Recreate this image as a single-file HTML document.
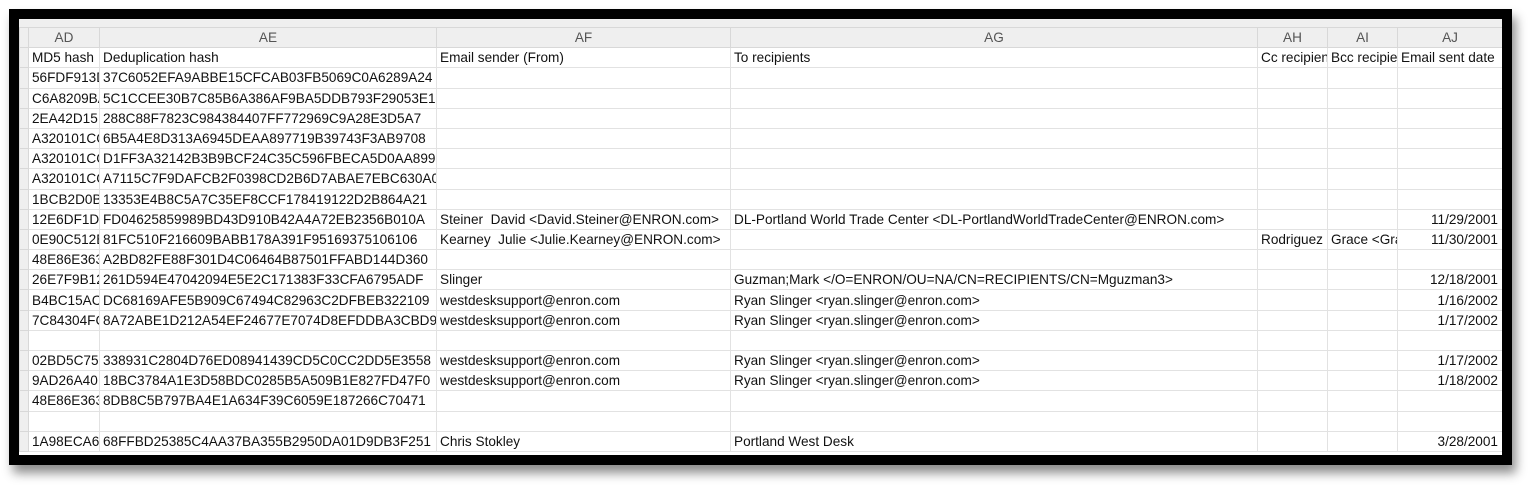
<!DOCTYPE html>
<html><head><meta charset="utf-8"><style>
body{margin:0;width:1536px;height:490px;background:#fff;overflow:hidden;position:relative;font-family:"Liberation Sans",Arial,sans-serif}
#frame{position:absolute;left:9px;top:9px;width:1503px;height:456px;background:#000;box-shadow:4px 8px 10px rgba(0,0,0,.45)}
#inner{position:absolute;left:10px;top:10px;width:1483px;height:436px;background:#fff;overflow:hidden}
table{position:absolute;left:0;top:8px;width:1483px;border-collapse:collapse;table-layout:fixed;font-size:13.6px;color:#111}
td{height:19.2px;padding:0 0 0 3px;border:1px solid #e2e2e2;white-space:nowrap;overflow:hidden;line-height:19px}
tr.h td{background:#efefef;color:#555;text-align:center;padding:0;border-color:#d8d8d8}
td.r{text-align:right;padding-right:4px}
td.s{background:#efefef;border-color:#d8d8d8}
.top{position:absolute;left:0;top:0;width:1483px;height:8px;background:#efefef}
</style></head><body>
<div id="frame"><div id="inner"><div class="top"></div>
<table>
<colgroup><col style="width:9px"><col style="width:71px"><col style="width:337px"><col style="width:294px"><col style="width:527px"><col style="width:70px"><col style="width:70px"><col style="width:105px"></colgroup>
<tr class="h"><td></td><td>AD</td><td>AE</td><td>AF</td><td>AG</td><td>AH</td><td>AI</td><td>AJ</td></tr>
<tr><td class="s"></td><td>MD5 hash</td><td>Deduplication hash</td><td>Email sender (From)</td><td>To recipients</td><td>Cc recipients</td><td>Bcc recipients</td><td>Email sent date</td></tr>
<tr><td class="s"></td><td>56FDF913D</td><td>37C6052EFA9ABBE15CFCAB03FB5069C0A6289A24</td><td></td><td></td><td></td><td></td><td></td></tr>
<tr><td class="s"></td><td>C6A8209BA</td><td>5C1CCEE30B7C85B6A386AF9BA5DDB793F29053E1</td><td></td><td></td><td></td><td></td><td></td></tr>
<tr><td class="s"></td><td>2EA42D15I</td><td>288C88F7823C984384407FF772969C9A28E3D5A7</td><td></td><td></td><td></td><td></td><td></td></tr>
<tr><td class="s"></td><td>A320101CC</td><td>6B5A4E8D313A6945DEAA897719B39743F3AB9708</td><td></td><td></td><td></td><td></td><td></td></tr>
<tr><td class="s"></td><td>A320101CC</td><td>D1FF3A32142B3B9BCF24C35C596FBECA5D0AA899</td><td></td><td></td><td></td><td></td><td></td></tr>
<tr><td class="s"></td><td>A320101CC</td><td>A7115C7F9DAFCB2F0398CD2B6D7ABAE7EBC630A0</td><td></td><td></td><td></td><td></td><td></td></tr>
<tr><td class="s"></td><td>1BCB2D0B</td><td>13353E4B8C5A7C35EF8CCF178419122D2B864A21</td><td></td><td></td><td></td><td></td><td></td></tr>
<tr><td class="s"></td><td>12E6DF1D</td><td>FD04625859989BD43D910B42A4A72EB2356B010A</td><td>Steiner&nbsp; David &lt;David.Steiner@ENRON.com&gt;</td><td>DL-Portland World Trade Center &lt;DL-PortlandWorldTradeCenter@ENRON.com&gt;</td><td></td><td></td><td class="r">11/29/2001</td></tr>
<tr><td class="s"></td><td>0E90C512E</td><td>81FC510F216609BABB178A391F95169375106106</td><td>Kearney&nbsp; Julie &lt;Julie.Kearney@ENRON.com&gt;</td><td></td><td>Rodriguez&nbsp;</td><td>Grace &lt;Gra</td><td class="r">11/30/2001</td></tr>
<tr><td class="s"></td><td>48E86E363</td><td>A2BD82FE88F301D4C06464B87501FFABD144D360</td><td></td><td></td><td></td><td></td><td></td></tr>
<tr><td class="s"></td><td>26E7F9B12</td><td>261D594E47042094E5E2C171383F33CFA6795ADF</td><td>Slinger</td><td>Guzman;Mark &lt;/O=ENRON/OU=NA/CN=RECIPIENTS/CN=Mguzman3&gt;</td><td></td><td></td><td class="r">12/18/2001</td></tr>
<tr><td class="s"></td><td>B4BC15AC</td><td>DC68169AFE5B909C67494C82963C2DFBEB322109</td><td>westdesksupport@enron.com</td><td>Ryan Slinger &lt;ryan.slinger@enron.com&gt;</td><td></td><td></td><td class="r">1/16/2002</td></tr>
<tr><td class="s"></td><td>7C84304FC</td><td>8A72ABE1D212A54EF24677E7074D8EFDDBA3CBD9</td><td>westdesksupport@enron.com</td><td>Ryan Slinger &lt;ryan.slinger@enron.com&gt;</td><td></td><td></td><td class="r">1/17/2002</td></tr>
<tr><td class="s"></td><td></td><td></td><td></td><td></td><td></td><td></td><td></td></tr>
<tr><td class="s"></td><td>02BD5C75</td><td>338931C2804D76ED08941439CD5C0CC2DD5E3558</td><td>westdesksupport@enron.com</td><td>Ryan Slinger &lt;ryan.slinger@enron.com&gt;</td><td></td><td></td><td class="r">1/17/2002</td></tr>
<tr><td class="s"></td><td>9AD26A40</td><td>18BC3784A1E3D58BDC0285B5A509B1E827FD47F0</td><td>westdesksupport@enron.com</td><td>Ryan Slinger &lt;ryan.slinger@enron.com&gt;</td><td></td><td></td><td class="r">1/18/2002</td></tr>
<tr><td class="s"></td><td>48E86E363</td><td>8DB8C5B797BA4E1A634F39C6059E187266C70471</td><td></td><td></td><td></td><td></td><td></td></tr>
<tr><td class="s"></td><td></td><td></td><td></td><td></td><td></td><td></td><td></td></tr>
<tr><td class="s"></td><td>1A98ECA6I</td><td>68FFBD25385C4AA37BA355B2950DA01D9DB3F251</td><td>Chris Stokley</td><td>Portland West Desk</td><td></td><td></td><td class="r">3/28/2001</td></tr>
</table>
</div></div>
</body></html>
